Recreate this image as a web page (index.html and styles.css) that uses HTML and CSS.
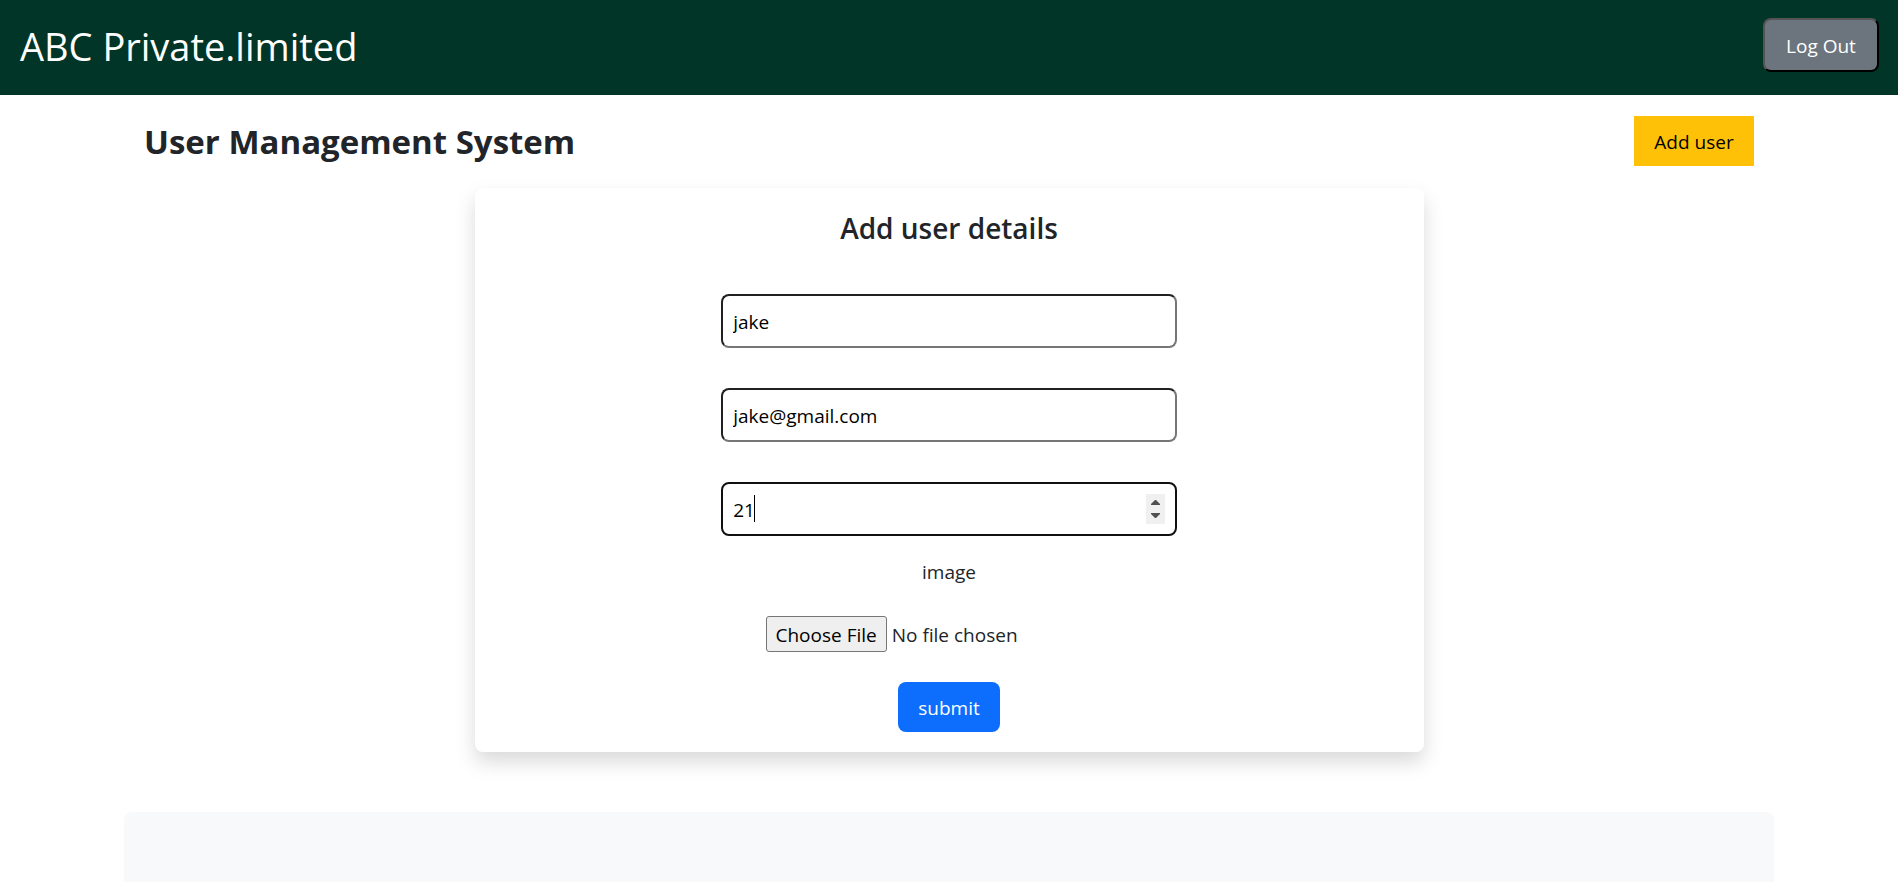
FILE: index.html
```html
<!DOCTYPE html>
<html lang="en">
<head>
<meta charset="utf-8">
<meta name="viewport" content="width=device-width, initial-scale=1">
<title>User Management System</title>
<link rel="stylesheet" href="styles.css">
</head>
<body>
<header class="navbar">
  <div class="brand">ABC Private.limited</div>
  <button type="button" class="btn btn-logout">Log Out</button>
</header>
<main class="container">
  <div class="toolbar">
    <h1 class="page-title">User Management System</h1>
    <button type="button" class="btn btn-add">Add user</button>
  </div>
  <form class="card">
    <h2 class="card-title">Add user details</h2>
    <input class="field" type="text" aria-label="Name" value="jake">
    <input class="field" type="email" aria-label="Email" value="jake@gmail.com">
    <div class="number">
      <input class="field" type="number" aria-label="Age" value="21" autofocus>
      <span class="caret"></span>
      <div class="spinner">
        <button type="button" class="step" aria-label="Increase">
          <svg width="9" height="5" viewBox="0 0 9 5"><path d="M0 5V4L4 0h1l4 4v1z" fill="#505050"/></svg>
        </button>
        <button type="button" class="step" aria-label="Decrease">
          <svg width="9" height="5" viewBox="0 0 9 5"><path d="M0 0v1l4 4h1l4-4V0z" fill="#505050"/></svg>
        </button>
      </div>
    </div>
    <label class="file-label" for="image">image</label>
    <input class="file" type="file" id="image">
    <button type="submit" class="btn btn-submit">submit</button>
  </form>
  <section class="panel" aria-label="Users"></section>
</main>
</body>
</html>
```
FILE: styles.css
```css
*, *::before, *::after {
  box-sizing: border-box;
}

body {
  margin: 0;
  min-height: 100vh;
  display: flex;
  flex-direction: column;
  overflow: hidden;
  background: #fff;
  color: #212529;
  font-family: "Open Sans", "Noto Sans", sans-serif;
  font-size: 19px;
  line-height: 30px;
}

button, input {
  font: inherit;
}

.navbar {
  display: flex;
  justify-content: space-between;
  align-items: flex-start;
  height: 95px;
  padding: 18px 19px 0 20px;
  background: #013528;
  color: #fff;
}

.brand {
  font-size: 38px;
  line-height: 56px;
}

.btn {
  padding: 11px 20px 9px;
  border: 0;
  border-radius: 8px;
  cursor: pointer;
}

.btn-logout {
  min-width: 116px;
  border: 2px outset #000;
  background: #6c757d;
  color: #fff;
}

.container {
  flex: 1;
  display: flex;
  flex-direction: column;
  align-items: center;
  width: 100%;
  max-width: 1650px;
  margin: 0 auto;
}

.toolbar {
  display: flex;
  justify-content: space-between;
  align-items: center;
  width: 100%;
  padding: 21px 20px 22px;
}

.page-title {
  margin: 0;
  padding-top: 2px;
  font-size: 33px;
  font-weight: 700;
  line-height: 48px;
}

.btn-add {
  min-width: 120px;
  border-radius: 0;
  background: #ffc107;
  color: #000;
}

.card {
  display: flex;
  flex-direction: column;
  align-items: center;
  width: 50vw;
  padding: 20px 0;
  border-radius: 8px;
  background: #fff;
  box-shadow: 0 10px 20px rgba(0, 0, 0, 0.15);
}

.card-title {
  margin: 0 0 46px;
  font-size: 28px;
  font-weight: 600;
  line-height: 40px;
}

.field {
  width: 48%;
  height: 54px;
  margin: 0 0 40px;
  padding: 11px 10px 9px;
  border: 2px inset #767676;
  border-radius: 8px;
  background: #fff;
  color: #000;
}

.number {
  position: relative;
  width: 48%;
  margin-bottom: 20px;
}

.number .field {
  display: block;
  width: 100%;
  margin: 0;
  caret-color: transparent;
  appearance: textfield;
}

.number .field:focus {
  border: 2px solid #101010;
  outline: 0;
}

.number .field::-webkit-inner-spin-button {
  appearance: none;
  margin: 0;
}

.caret {
  position: absolute;
  top: 13px;
  left: 33px;
  width: 1px;
  height: 27px;
  background: #000;
}

.spinner {
  position: absolute;
  top: 12px;
  right: 12px;
  display: flex;
  flex-direction: column;
  justify-content: center;
  gap: 8px;
  width: 19px;
  height: 30px;
  background: #f0f0f0;
}

.step {
  display: flex;
  justify-content: center;
  padding: 0;
  border: 0;
  background: none;
}

.file-label {
  padding-top: 1px;
  margin-bottom: 29px;
}

.file {
  width: 367px;
  max-width: 100%;
  height: 36px;
  margin-bottom: 30px;
}

.file::file-selector-button {
  height: 36px;
  margin-right: 5px;
  padding: 1px 9px 0;
  border: 1px solid #767676;
  border-radius: 3px;
  background: #efefef;
  color: #000;
  font: inherit;
}

.btn-submit {
  background: #0d6efd;
  color: #fff;
}

.panel {
  flex: 1;
  width: 100%;
  min-height: 70px;
  margin-top: 60px;
  border-radius: 8px 8px 0 0;
  background: #f8f9fa;
}
```
